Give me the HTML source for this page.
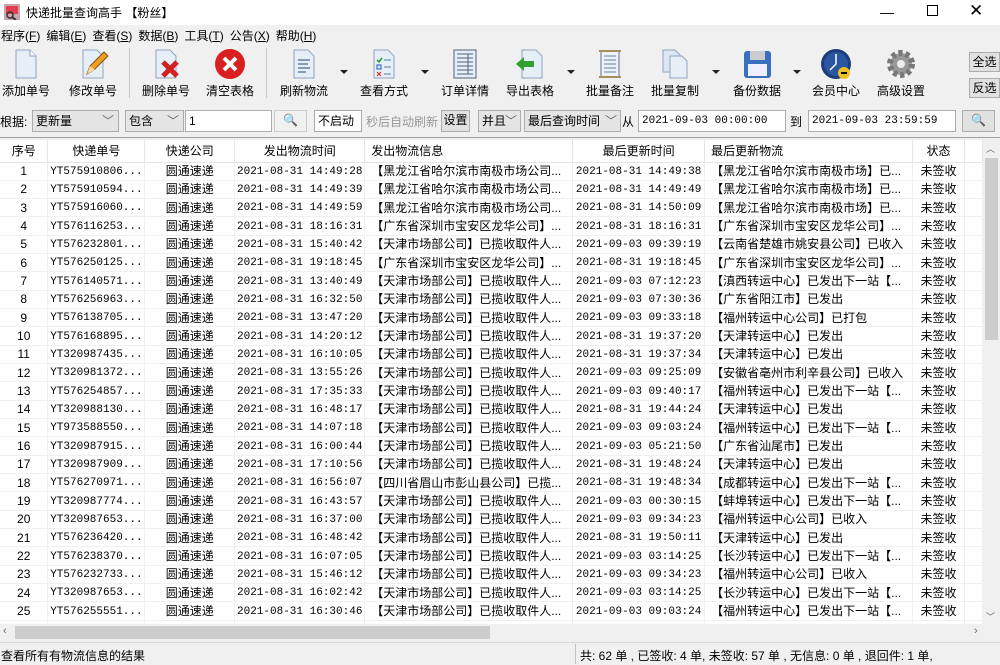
<!DOCTYPE html>
<html><head><meta charset="utf-8"><style>
*{margin:0;padding:0;box-sizing:border-box}
body{width:1000px;height:665px;overflow:hidden;background:#f0f0f0;font-family:"Liberation Sans","Noto Sans CJK SC",sans-serif;font-size:12px;color:#000;position:relative}
.a{position:absolute}
.title{left:0;top:0;width:1000px;height:25px;background:#fff}
.menu span{margin-right:6px}
.tb{position:absolute;top:48px;width:70px;text-align:center}
.tb svg{display:block;margin:0 auto}
.tb div{margin-top:2px;font-size:12px}
.arr{position:absolute;top:70px;width:0;height:0;border-left:4px solid transparent;border-right:4px solid transparent;border-top:4px solid #222}
.sep{position:absolute;top:48px;width:1px;height:50px;background:#c8c8c8}
.box{position:absolute;top:110px;height:22px;border:1px solid #abadb3;background:#fff;line-height:20px;padding-left:3px;font-size:12px}
.sel{background:#e5e5e5;border-color:#acacac}
.btn{position:absolute;border:1px solid #adadad;background:#e1e1e1;text-align:center;line-height:18px}
.grid{position:absolute;left:0;top:140px;width:983px;height:484px;background:#fff;overflow:hidden}
table{border-collapse:collapse;table-layout:fixed;font-size:12px}
td,th{height:18.33px;line-height:16px;white-space:nowrap;overflow:hidden;border-right:1px solid #f0f0f0;border-bottom:1px solid #f0f0f0;padding:0;text-align:center;font-weight:normal;vertical-align:middle}
th{height:22px;border-right:1px solid #e5e5e5;border-bottom:1px solid #e5e5e5;font-size:12px}
td.l,th.l{text-align:left;padding-left:6px}
td.m{font-family:"Liberation Mono",monospace;font-size:11px}
td.m span{display:inline-block;line-height:16px;vertical-align:middle;position:relative;top:1px}
</style></head><body>
<div class="a title"></div>
<svg class="a" style="left:4px;top:4px" width="16" height="16"><rect x="0" y="0" width="16" height="16" fill="#c9a6b0"/><rect x="2" y="2" width="12" height="8" fill="#e04050"/><circle cx="6" cy="11" r="3" fill="none" stroke="#333" stroke-width="1.5"/><line x1="8" y1="13" x2="12" y2="16" stroke="#333" stroke-width="2"/></svg>
<div class="a" style="left:26px;top:4px;font-size:12px">快递批量查询高手 【粉丝】</div>
<div class="a" style="left:880px;top:4px;font-size:14px">—</div>
<div class="a" style="left:927px;top:5px;width:11px;height:11px;border:1px solid #000"></div>
<div class="a" style="left:969px;top:1px;font-size:17px">✕</div>
<div class="a menu" style="left:1px;top:27px">
<span>程序(<u>F</u>)</span><span>编辑(<u>E</u>)</span><span>查看(<u>S</u>)</span><span>数据(<u>B</u>)</span><span>工具(<u>T</u>)</span><span>公告(<u>X</u>)</span><span>帮助(<u>H</u>)</span></div>

<div class="tb" style="left:-9px"><svg width="32" height="32"><path d="M6 2h14l6 6v22H6z" fill="#e6eef8" stroke="#8fa5c0"/><path d="M20 2v6h6" fill="#fff" stroke="#8fa5c0"/></svg><div>添加单号</div></div>
<div class="tb" style="left:58px"><svg width="32" height="32"><path d="M6 2h14l6 6v22H6z" fill="#e6eef8" stroke="#8fa5c0"/><path d="M10 26l3-8 14-14 4 4-14 14z" fill="#f0a020" stroke="#805010"/><path d="M10 26l3-8 5 4z" fill="#f5d8a0"/></svg><div>修改单号</div></div>
<div class="sep" style="left:129px"></div>
<div class="tb" style="left:131px"><svg width="32" height="32"><path d="M6 2h14l6 6v22H6z" fill="#e6eef8" stroke="#8fa5c0"/><path d="M13 14l14 14M27 14L13 28" stroke="#d02020" stroke-width="5"/></svg><div>删除单号</div></div>
<div class="tb" style="left:195px"><svg width="32" height="32"><circle cx="16" cy="16" r="15" fill="#d82020"/><path d="M10 10l12 12M22 10L10 22" stroke="#fff" stroke-width="4"/></svg><div>清空表格</div></div>
<div class="sep" style="left:266px"></div>
<div class="tb" style="left:269px"><svg width="32" height="32"><path d="M6 2h14l6 6v22H6z" fill="#e6eef8" stroke="#8fa5c0"/><path d="M10 12h12M10 16h10M10 20h12M10 24h8" stroke="#6080a0" stroke-width="1.5"/></svg><div>刷新物流</div></div>
<div class="arr" style="left:340px"></div>
<div class="tb" style="left:349px"><svg width="32" height="32"><path d="M6 2h14l6 6v22H6z" fill="#e6eef8" stroke="#8fa5c0"/><path d="M9 12l2 2 3-4" stroke="#20a020" fill="none" stroke-width="1.5"/><rect x="9" y="17" width="4" height="4" fill="none" stroke="#2050d0"/><path d="M9 24l4 4M13 24l-4 4" stroke="#d02020"/><path d="M16 12h7M16 19h7M16 26h7" stroke="#6080a0"/></svg><div>查看方式</div></div>
<div class="arr" style="left:421px"></div>
<div class="tb" style="left:430px"><svg width="32" height="32"><rect x="5" y="2" width="22" height="28" fill="#e6eef8" stroke="#506080"/><path d="M8 6h16M8 10h16M8 14h16M8 18h16M8 22h16M8 26h16M19 6v20" stroke="#506080"/></svg><div>订单详情</div></div>
<div class="tb" style="left:495px"><svg width="32" height="32"><path d="M8 2h14l6 6v22H8z" fill="#e6eef8" stroke="#8fa5c0"/><path d="M2 16l8-7v4h10v6H10v4z" fill="#30a030"/></svg><div>导出表格</div></div>
<div class="arr" style="left:567px"></div>
<div class="tb" style="left:575px"><svg width="32" height="32"><rect x="7" y="3" width="18" height="26" fill="#eef2f8" stroke="#607090"/><path d="M5 3h22M5 29h22" stroke="#a09060" stroke-width="2"/><path d="M10 8h12M10 12h12M10 16h12M10 20h12M10 24h12" stroke="#6080a0"/></svg><div>批量备注</div></div>
<div class="tb" style="left:640px"><svg width="32" height="32"><path d="M4 2h12l5 5v17H4z" fill="#dde6f2" stroke="#8fa5c0"/><path d="M11 8h12l5 5v17H11z" fill="#e6eef8" stroke="#8fa5c0"/></svg><div>批量复制</div></div>
<div class="arr" style="left:712px"></div>
<div class="tb" style="left:722px"><svg width="32" height="32"><rect x="3" y="3" width="27" height="27" rx="3" fill="#3a6fc0"/><rect x="9" y="3" width="15" height="9" fill="#ccc"/><rect x="7" y="16" width="19" height="12" fill="#eef"/></svg><div>备份数据</div></div>
<div class="arr" style="left:793px"></div>
<div class="tb" style="left:801px"><svg width="32" height="32"><circle cx="16" cy="16" r="15" fill="#1f3d7a"/><circle cx="16" cy="16" r="12" fill="#2a55a0"/><path d="M16 6v10l-6 6" stroke="#fff" stroke-width="1.5" fill="none"/><circle cx="24" cy="25" r="6" fill="#f0c020"/><path d="M21 25h6" stroke="#000" stroke-width="2"/></svg><div>会员中心</div></div>
<div class="tb" style="left:866px"><svg width="32" height="32"><circle cx="16" cy="16" r="11" fill="#999" stroke="#777" stroke-width="6" stroke-dasharray="4 3"/><circle cx="16" cy="16" r="4" fill="#eee"/></svg><div>高级设置</div></div>
<div class="btn" style="left:969px;top:52px;width:31px;height:20px">全选</div>
<div class="btn" style="left:969px;top:78px;width:31px;height:20px">反选</div>

<div class="a" style="left:0;top:113px">根据:</div>
<div class="box sel" style="left:32px;width:87px">更新量<span style="position:absolute;right:4px;color:#666">﹀</span></div>
<div class="box sel" style="left:125px;width:59px">包含<span style="position:absolute;right:4px;color:#666">﹀</span></div>
<div class="box" style="left:185px;width:87px">1</div>
<div class="btn" style="left:274px;top:110px;width:33px;height:22px;background:#f0f0f0;border-color:#ccc;color:#999">🔍</div>
<div class="box" style="left:314px;width:48px;border-color:#aaa">不启动</div>
<div class="a" style="left:366px;top:113px;color:#999">秒后自动刷新</div>
<div class="btn" style="left:441px;top:110px;width:29px;height:22px">设置</div>
<div class="box sel" style="left:478px;width:43px">并且<span style="position:absolute;right:3px;color:#666">﹀</span></div>
<div class="box sel" style="left:524px;width:97px">最后查询时间<span style="position:absolute;right:3px;color:#666">﹀</span></div>
<div class="a" style="left:622px;top:113px">从</div>
<div class="box" style="left:638px;width:148px;font-family:'Liberation Mono',monospace;font-size:11px">2021-09-03 00:00:00</div>
<div class="a" style="left:790px;top:113px">到</div>
<div class="box" style="left:808px;width:148px;font-family:'Liberation Mono',monospace;font-size:11px">2021-09-03 23:59:59</div>
<div class="btn" style="left:962px;top:110px;width:33px;height:22px">🔍</div>
<div class="a" style="left:0;top:137px;width:1000px;height:1px;background:#a0a0a0"></div>

<div class="grid"><table>
<colgroup><col style="width:48px"><col style="width:97px"><col style="width:90px"><col style="width:130px"><col style="width:208px"><col style="width:132px"><col style="width:208px"><col style="width:52px"><col style="width:18px"></colgroup>
<tr><th>序号</th><th>快递单号</th><th>快递公司</th><th>发出物流时间</th><th class="l">发出物流信息</th><th>最后更新时间</th><th class="l">最后更新物流</th><th>状态</th><th></th></tr>
<tr><td>1</td><td class="m"><span>YT575910806...</span></td><td>圆通速递</td><td class="m"><span>2021-08-31 14:49:28</span></td><td class="l">【黑龙江省哈尔滨市南极市场公司...</td><td class="m"><span>2021-08-31 14:49:38</span></td><td class="l">【黑龙江省哈尔滨市南极市场】已...</td><td>未签收</td><td></td></tr>
<tr><td>2</td><td class="m"><span>YT575910594...</span></td><td>圆通速递</td><td class="m"><span>2021-08-31 14:49:39</span></td><td class="l">【黑龙江省哈尔滨市南极市场公司...</td><td class="m"><span>2021-08-31 14:49:49</span></td><td class="l">【黑龙江省哈尔滨市南极市场】已...</td><td>未签收</td><td></td></tr>
<tr><td>3</td><td class="m"><span>YT575916060...</span></td><td>圆通速递</td><td class="m"><span>2021-08-31 14:49:59</span></td><td class="l">【黑龙江省哈尔滨市南极市场公司...</td><td class="m"><span>2021-08-31 14:50:09</span></td><td class="l">【黑龙江省哈尔滨市南极市场】已...</td><td>未签收</td><td></td></tr>
<tr><td>4</td><td class="m"><span>YT576116253...</span></td><td>圆通速递</td><td class="m"><span>2021-08-31 18:16:31</span></td><td class="l">【广东省深圳市宝安区龙华公司】...</td><td class="m"><span>2021-08-31 18:16:31</span></td><td class="l">【广东省深圳市宝安区龙华公司】...</td><td>未签收</td><td></td></tr>
<tr><td>5</td><td class="m"><span>YT576232801...</span></td><td>圆通速递</td><td class="m"><span>2021-08-31 15:40:42</span></td><td class="l">【天津市场部公司】已揽收取件人...</td><td class="m"><span>2021-09-03 09:39:19</span></td><td class="l">【云南省楚雄市姚安县公司】已收入</td><td>未签收</td><td></td></tr>
<tr><td>6</td><td class="m"><span>YT576250125...</span></td><td>圆通速递</td><td class="m"><span>2021-08-31 19:18:45</span></td><td class="l">【广东省深圳市宝安区龙华公司】...</td><td class="m"><span>2021-08-31 19:18:45</span></td><td class="l">【广东省深圳市宝安区龙华公司】...</td><td>未签收</td><td></td></tr>
<tr><td>7</td><td class="m"><span>YT576140571...</span></td><td>圆通速递</td><td class="m"><span>2021-08-31 13:40:49</span></td><td class="l">【天津市场部公司】已揽收取件人...</td><td class="m"><span>2021-09-03 07:12:23</span></td><td class="l">【滇西转运中心】已发出下一站【...</td><td>未签收</td><td></td></tr>
<tr><td>8</td><td class="m"><span>YT576256963...</span></td><td>圆通速递</td><td class="m"><span>2021-08-31 16:32:50</span></td><td class="l">【天津市场部公司】已揽收取件人...</td><td class="m"><span>2021-09-03 07:30:36</span></td><td class="l">【广东省阳江市】已发出</td><td>未签收</td><td></td></tr>
<tr><td>9</td><td class="m"><span>YT576138705...</span></td><td>圆通速递</td><td class="m"><span>2021-08-31 13:47:20</span></td><td class="l">【天津市场部公司】已揽收取件人...</td><td class="m"><span>2021-09-03 09:33:18</span></td><td class="l">【福州转运中心公司】已打包</td><td>未签收</td><td></td></tr>
<tr><td>10</td><td class="m"><span>YT576168895...</span></td><td>圆通速递</td><td class="m"><span>2021-08-31 14:20:12</span></td><td class="l">【天津市场部公司】已揽收取件人...</td><td class="m"><span>2021-08-31 19:37:20</span></td><td class="l">【天津转运中心】已发出</td><td>未签收</td><td></td></tr>
<tr><td>11</td><td class="m"><span>YT320987435...</span></td><td>圆通速递</td><td class="m"><span>2021-08-31 16:10:05</span></td><td class="l">【天津市场部公司】已揽收取件人...</td><td class="m"><span>2021-08-31 19:37:34</span></td><td class="l">【天津转运中心】已发出</td><td>未签收</td><td></td></tr>
<tr><td>12</td><td class="m"><span>YT320981372...</span></td><td>圆通速递</td><td class="m"><span>2021-08-31 13:55:26</span></td><td class="l">【天津市场部公司】已揽收取件人...</td><td class="m"><span>2021-09-03 09:25:09</span></td><td class="l">【安徽省亳州市利辛县公司】已收入</td><td>未签收</td><td></td></tr>
<tr><td>13</td><td class="m"><span>YT576254857...</span></td><td>圆通速递</td><td class="m"><span>2021-08-31 17:35:33</span></td><td class="l">【天津市场部公司】已揽收取件人...</td><td class="m"><span>2021-09-03 09:40:17</span></td><td class="l">【福州转运中心】已发出下一站【...</td><td>未签收</td><td></td></tr>
<tr><td>14</td><td class="m"><span>YT320988130...</span></td><td>圆通速递</td><td class="m"><span>2021-08-31 16:48:17</span></td><td class="l">【天津市场部公司】已揽收取件人...</td><td class="m"><span>2021-08-31 19:44:24</span></td><td class="l">【天津转运中心】已发出</td><td>未签收</td><td></td></tr>
<tr><td>15</td><td class="m"><span>YT973588550...</span></td><td>圆通速递</td><td class="m"><span>2021-08-31 14:07:18</span></td><td class="l">【天津市场部公司】已揽收取件人...</td><td class="m"><span>2021-09-03 09:03:24</span></td><td class="l">【福州转运中心】已发出下一站【...</td><td>未签收</td><td></td></tr>
<tr><td>16</td><td class="m"><span>YT320987915...</span></td><td>圆通速递</td><td class="m"><span>2021-08-31 16:00:44</span></td><td class="l">【天津市场部公司】已揽收取件人...</td><td class="m"><span>2021-09-03 05:21:50</span></td><td class="l">【广东省汕尾市】已发出</td><td>未签收</td><td></td></tr>
<tr><td>17</td><td class="m"><span>YT320987909...</span></td><td>圆通速递</td><td class="m"><span>2021-08-31 17:10:56</span></td><td class="l">【天津市场部公司】已揽收取件人...</td><td class="m"><span>2021-08-31 19:48:24</span></td><td class="l">【天津转运中心】已发出</td><td>未签收</td><td></td></tr>
<tr><td>18</td><td class="m"><span>YT576270971...</span></td><td>圆通速递</td><td class="m"><span>2021-08-31 16:56:07</span></td><td class="l">【四川省眉山市彭山县公司】已揽...</td><td class="m"><span>2021-08-31 19:48:34</span></td><td class="l">【成都转运中心】已发出下一站【...</td><td>未签收</td><td></td></tr>
<tr><td>19</td><td class="m"><span>YT320987774...</span></td><td>圆通速递</td><td class="m"><span>2021-08-31 16:43:57</span></td><td class="l">【天津市场部公司】已揽收取件人...</td><td class="m"><span>2021-09-03 00:30:15</span></td><td class="l">【蚌埠转运中心】已发出下一站【...</td><td>未签收</td><td></td></tr>
<tr><td>20</td><td class="m"><span>YT320987653...</span></td><td>圆通速递</td><td class="m"><span>2021-08-31 16:37:00</span></td><td class="l">【天津市场部公司】已揽收取件人...</td><td class="m"><span>2021-09-03 09:34:23</span></td><td class="l">【福州转运中心公司】已收入</td><td>未签收</td><td></td></tr>
<tr><td>21</td><td class="m"><span>YT576236420...</span></td><td>圆通速递</td><td class="m"><span>2021-08-31 16:48:42</span></td><td class="l">【天津市场部公司】已揽收取件人...</td><td class="m"><span>2021-08-31 19:50:11</span></td><td class="l">【天津转运中心】已发出</td><td>未签收</td><td></td></tr>
<tr><td>22</td><td class="m"><span>YT576238370...</span></td><td>圆通速递</td><td class="m"><span>2021-08-31 16:07:05</span></td><td class="l">【天津市场部公司】已揽收取件人...</td><td class="m"><span>2021-09-03 03:14:25</span></td><td class="l">【长沙转运中心】已发出下一站【...</td><td>未签收</td><td></td></tr>
<tr><td>23</td><td class="m"><span>YT576232733...</span></td><td>圆通速递</td><td class="m"><span>2021-08-31 15:46:12</span></td><td class="l">【天津市场部公司】已揽收取件人...</td><td class="m"><span>2021-09-03 09:34:23</span></td><td class="l">【福州转运中心公司】已收入</td><td>未签收</td><td></td></tr>
<tr><td>24</td><td class="m"><span>YT320987653...</span></td><td>圆通速递</td><td class="m"><span>2021-08-31 16:02:42</span></td><td class="l">【天津市场部公司】已揽收取件人...</td><td class="m"><span>2021-09-03 03:14:25</span></td><td class="l">【长沙转运中心】已发出下一站【...</td><td>未签收</td><td></td></tr>
<tr><td>25</td><td class="m"><span>YT576255551...</span></td><td>圆通速递</td><td class="m"><span>2021-08-31 16:30:46</span></td><td class="l">【天津市场部公司】已揽收取件人...</td><td class="m"><span>2021-09-03 09:03:24</span></td><td class="l">【福州转运中心】已发出下一站【...</td><td>未签收</td><td></td></tr>
<tr><td>26</td><td class="m"></td><td></td><td></td><td></td><td></td><td></td><td></td><td></td></tr>
</table></div>
<div class="a" style="left:983px;top:140px;width:17px;height:484px;background:#f0f0f0"></div>
<div class="a" style="left:986px;top:142px;font-size:9px;color:#666">︿</div>
<div class="a" style="left:985px;top:158px;width:13px;height:182px;background:#cdcdcd"></div>
<div class="a" style="left:986px;top:610px;font-size:9px;color:#666">﹀</div>
<div class="a" style="left:0;top:624px;width:1000px;height:17px;background:#f0f0f0"></div>
<div class="a" style="left:3px;top:625px;font-size:11px;color:#666">‹</div>
<div class="a" style="left:15px;top:626px;width:475px;height:13px;background:#cdcdcd"></div>
<div class="a" style="left:974px;top:625px;font-size:11px;color:#666">›</div>
<div class="a" style="left:0;top:642px;width:1000px;height:1px;background:#d8d8d8"></div>
<div class="a" style="left:1px;top:647px">查看所有有物流信息的结果</div>
<div class="a" style="left:575px;top:644px;width:1px;height:20px;background:#c0c0c0"></div>
<div class="a" style="left:580px;top:647px;white-space:nowrap">共: 62 单 , 已签收:  4 单, 未签收:  57 单 , 无信息: 0 单 , 退回件: 1 单,</div>
</body></html>
